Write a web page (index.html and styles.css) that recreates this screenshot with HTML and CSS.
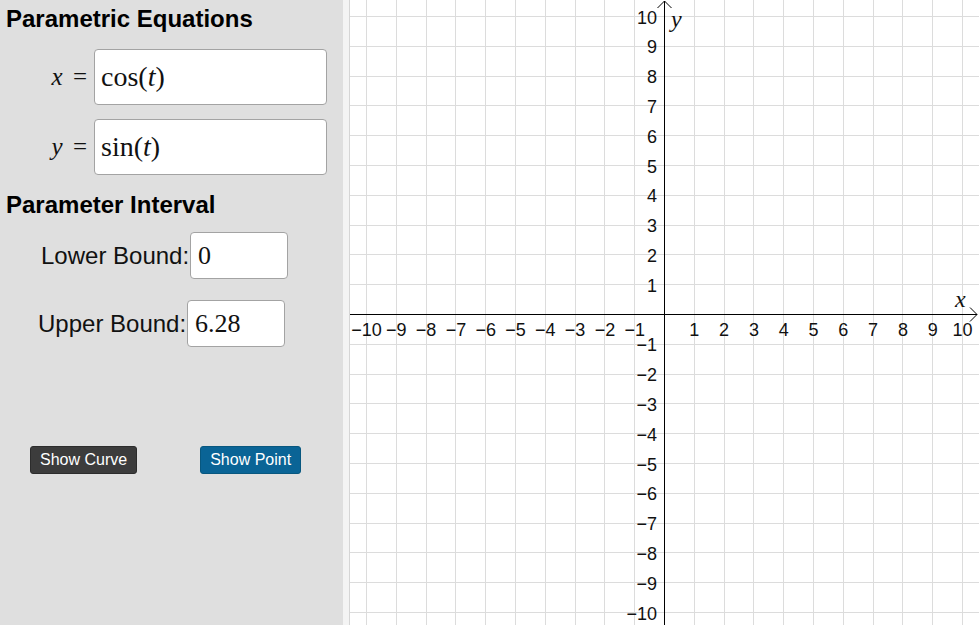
FILE: index.html
```html
<!DOCTYPE html>
<html lang="en">
<head>
  <meta charset="UTF-8" />
  <title>Parametric Equations</title>
  <link rel="stylesheet" href="styles.css">
</head>
<body>
  <div class="app">

    <!-- left panel -->
    <div class="panel">
      <h2>Parametric Equations</h2>

      <div class="eq-row">
        <span class="math-label"><i>x</i> =</span>
        <div class="math-input">cos(<i>t</i>)</div>
      </div>

      <div class="eq-row">
        <span class="math-label"><i>y</i> =</span>
        <div class="math-input">sin(<i>t</i>)</div>
      </div>

      <h2>Parameter Interval</h2>

      <div class="bound-row lower">
        <span class="bound-label">Lower Bound:</span>
        <div class="bound-input">0</div>
      </div>

      <div class="bound-row upper">
        <span class="bound-label">Upper Bound:</span>
        <div class="bound-input">6.28</div>
      </div>

      <div class="buttons">
        <button class="btn btn-dark">Show Curve</button>
        <button class="btn btn-blue">Show Point</button>
      </div>
    </div>

    <div class="strip"></div>

    <!-- graphics view -->
    <div class="graph">
      <svg id="graph" width="629" height="625" viewBox="350 0 629 625">
        <g id="grid"></g>
        <g class="axes">
          <line x1="664.5" y1="1" x2="664.5" y2="625" />
          <line x1="350" y1="314.5" x2="977" y2="314.5" />
          <polyline points="657.5,8 664.5,1 671.5,8" />
          <polyline points="970,307.5 977,314.5 970,321.5" />
        </g>
        <g id="labels" class="tick-labels"></g>
        <text class="axis-name" x="671" y="27">y</text>
        <text class="axis-name" x="955" y="307">x</text>
      </svg>
    </div>
  </div>

  <script>
    const OX = 664.5;
    const OY = 314.5;
    const U = 29.8;
    const NS = 'http://www.w3.org/2000/svg';

    const grid = document.getElementById('grid');
    const labels = document.getElementById('labels');

    function add(parent, tag, attrs, text) {
      const el = document.createElementNS(NS, tag);
      for (const k in attrs) el.setAttribute(k, attrs[k]);
      if (text) el.textContent = text;
      parent.appendChild(el);
    }

    for (let k = -10; k <= 10; k++) {
      if (k === 0) continue;
      const x = Math.round(OX + k * U - 0.5) + 0.5;
      const y = Math.round(OY - k * U - 0.5) + 0.5;
      add(grid, 'line', { x1: x, y1: 0, x2: x, y2: 625 });
      add(grid, 'line', { x1: 350, y1: y, x2: 979, y2: y });

      const txt = k < 0 ? '\u2212' + Math.abs(k) : String(k);
      add(labels, 'text', { x: OX + k * U, y: OY + 21, 'text-anchor': 'middle' }, txt);
      add(labels, 'text', { x: 657, y: OY - k * U + 7, 'text-anchor': 'end' }, txt);
    }
  </script>
</body>
</html>
```

FILE: styles.css
```css
body {
  margin: 0;
  overflow: hidden;
  font-family: "Liberation Sans", Arial, sans-serif;
}

.app {
  display: flex;
  width: 979px;
  height: 625px;
}

.panel {
  width: 343px;
  flex-shrink: 0;
  background: #dfdfdf;
  padding-top: 5px;
  box-sizing: border-box;
}

h2 {
  margin: 0 0 0 6px;
  font-size: 24px;
  line-height: 28px;
  font-weight: bold;
  color: #000;
}

.eq-row {
  display: flex;
  align-items: center;
  margin-top: 16px;
}

.eq-row + .eq-row {
  margin-top: 14px;
}

.eq-row + h2 {
  margin-top: 16px;
}

.math-label {
  width: 87px;
  text-align: right;
  font-family: "Liberation Serif", "Times New Roman", serif;
  font-size: 25px;
  color: #111;
  margin-right: 7px;
  word-spacing: 4px;
}

.math-input {
  width: 233px;
  height: 56px;
  box-sizing: border-box;
  background: #fff;
  border: 1px solid #a3a3a3;
  border-radius: 4px;
  padding-left: 6px;
  display: flex;
  align-items: center;
  font-family: "Liberation Serif", "Times New Roman", serif;
  font-size: 28px;
  color: #111;
}

.bound-row {
  display: flex;
  align-items: center;
  gap: 1px;
}

.bound-row.lower {
  margin-top: 13px;
  padding-left: 41px;
}

.bound-row.upper {
  margin-top: 21px;
  padding-left: 38px;
}

.bound-label {
  font-size: 24px;
  color: #111;
}

.bound-input {
  width: 98px;
  height: 47px;
  box-sizing: border-box;
  background: #fff;
  border: 1px solid #a3a3a3;
  border-radius: 4px;
  padding-left: 7px;
  display: flex;
  align-items: center;
  font-family: "Liberation Serif", "Times New Roman", serif;
  font-size: 26px;
  color: #111;
}

.buttons {
  display: flex;
  margin-top: 99px;
  padding-left: 30px;
  gap: 63px;
}

.btn {
  height: 28px;
  padding: 0 9px;
  border-radius: 3px;
  font-family: "Liberation Sans", Arial, sans-serif;
  font-size: 16px;
  color: #fff;
  white-space: nowrap;
  cursor: pointer;
}

.btn-dark {
  background: #3c3c3c;
  border: 1px solid #2c2c2c;
}

.btn-blue {
  background: #0a6496;
  border: 1px solid #08577f;
}

.strip {
  width: 6px;
  flex-shrink: 0;
  background: #f4f4f4;
}

.graph {
  flex: 1;
  background: #fff;
  border-left: 1px solid #d6d6d6;
  overflow: hidden;
}

.graph svg {
  display: block;
}

#grid line {
  stroke: #dcdcdc;
  stroke-width: 1;
}

.axes line,
.axes polyline {
  stroke: #000;
  stroke-width: 1;
  fill: none;
}

.tick-labels text {
  font-family: "Liberation Sans", Arial, sans-serif;
  font-size: 18px;
  fill: #111;
}

.axis-name {
  font-family: "Liberation Serif", "Times New Roman", serif;
  font-style: italic;
  font-size: 24px;
  fill: #111;
}
```
